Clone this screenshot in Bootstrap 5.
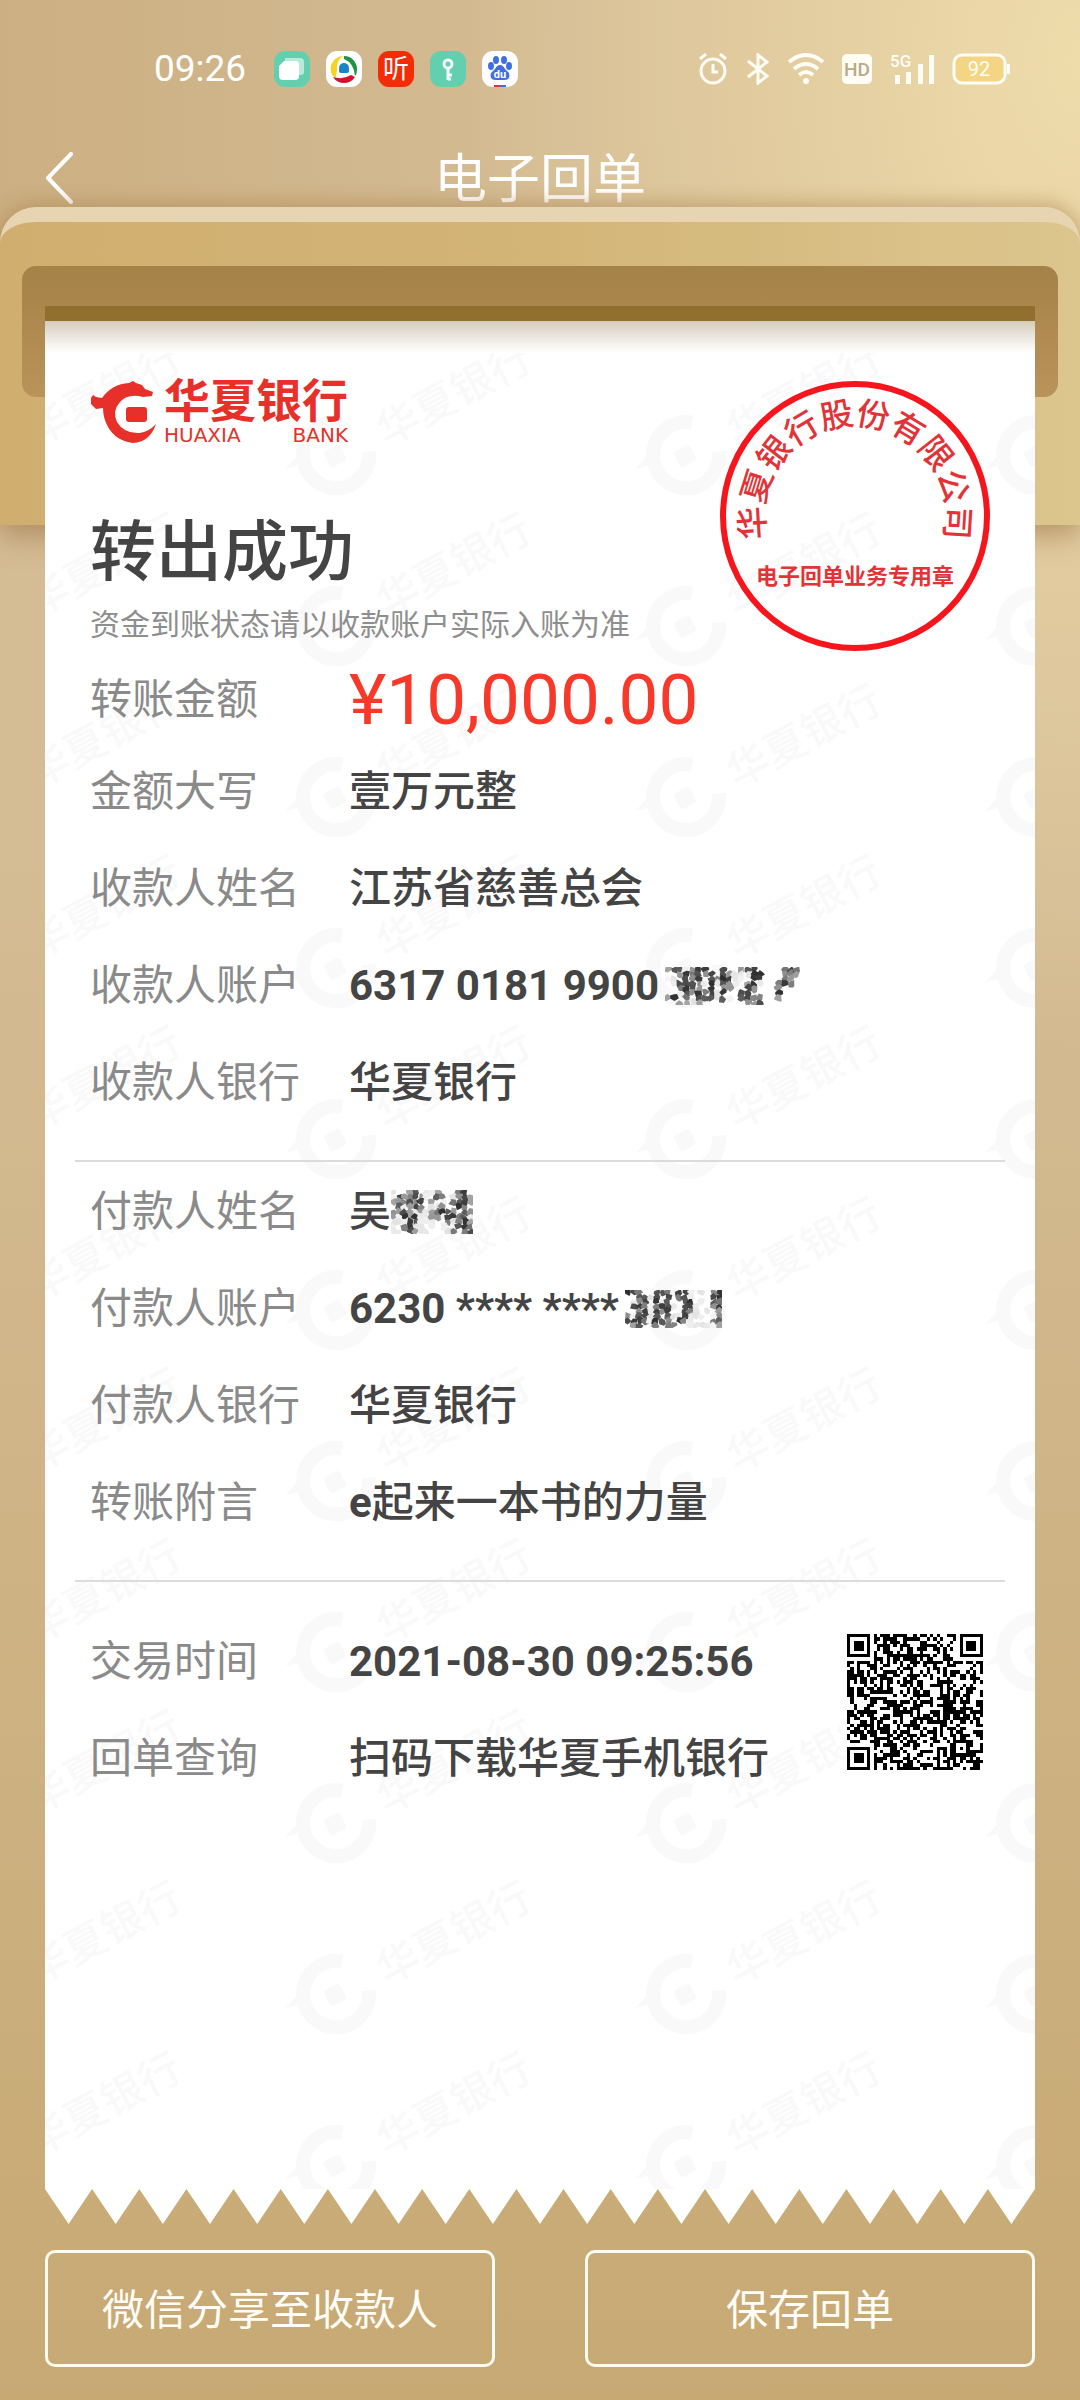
<!DOCTYPE html>
<html lang="zh-CN">
<head>
<meta charset="utf-8">
<meta name="viewport" content="width=device-width, initial-scale=1">
<title>电子回单</title>
<link href="https://cdn.jsdelivr.net/npm/bootstrap@5.3.0/dist/css/bootstrap.min.css" rel="stylesheet">
<style>
  body {
    min-height: 100vh;
    font-family: Roboto, "Noto Sans CJK SC", sans-serif;
    color: #444;
    background:
      radial-gradient(ellipse 620px 1000px at 100% 60px, #efdcab 0%, rgba(239, 220, 171, 0) 100%),
      linear-gradient(90deg, rgba(196, 164, 114, .5) 0%, rgba(217, 195, 152, 0) 55%) top / 100% 300px no-repeat,
      linear-gradient(180deg, #d4bc94 0%, #d4bc94 35%, #c9ac78 90%, #c7a974 100%);
  }
  .status-bar { padding: 42px 70px 0 154px; height: 96px; }
  .status-time { font-size: 37px; line-height: 54px; font-weight: 400; width: 120px; }
  .status-icons { gap: 18px; }
  .title-bar { margin-top: 53px; height: 57px; padding: 0 40px; }
  .title-bar h1 { font-size: 53px; line-height: 57px; font-weight: 400; padding-top: 5px; }
  .side-slot { width: 60px; }
  svg text { font-family: Roboto, "Noto Sans CJK SC", sans-serif; }

  /* printer slot and the paper share one grid cell */
  .printer { display: grid; margin-top: 1px; }
  .printer > * { grid-area: 1 / 1; }
  .housing {
    height: 318px;
    padding: 44px 22px 0;
    border-top: 15px solid #e6d5b0;
    border-radius: 36px 36px 0 0;
    background: linear-gradient(90deg, #d0ae70, #d3b577 50%, #dcc68e);
    box-shadow: 0 -6px 16px rgba(176, 132, 80, .35), 0 12px 28px rgba(150, 105, 60, .5);
  }
  .slot-hole {
    height: 131px;
    padding: 40px 23px 0;
    border-radius: 14px;
    background: linear-gradient(180deg, #a48248, #ad884f 40%, #b9935a);
  }
  .slot-gap { height: 15px; background: #91702f; }
  .paper-wrap { margin: 114px 45px 0; position: relative; }
  .paper {
    position: relative;
    padding: 60px 0 383px;
    background: linear-gradient(180deg, #d6cdb9 0, #e9e4dc 14px, #fff 32px);
  }
  .watermark { position: absolute; inset: 0; width: 100%; height: 100%; }
  .paper-body { position: relative; }
  .px-paper { padding-left: 45px; padding-right: 45px; }
  .tear-edge { height: 35px; }

  .brand-name { font-size: 46px; line-height: 42px; font-weight: 700; }
  .brand-latin { font: 20px/18px "DejaVu Sans", sans-serif; margin-top: 4px; }
  .brand-color { color: #e8302a; height: 62px; }
  .result-title { font-size: 66px; line-height: 80px; margin-top: 70px; font-weight: 500; }
  .result-note { font-size: 30px; line-height: 40px; margin-top: 12px; color: #8e8e8e; }
  .field-row { min-height: 97px; font-size: 42px; line-height: 60px; padding-top: 2px; }
  .field-row dt { width: 259px; font-weight: 400; color: #8a8a8a; }
  .field-row dd { font-weight: 500; }
  .amount-row { min-height: 91px; padding-top: 6px; }
  .amount-row dd { font-size: 71px; font-weight: 400; color: #f8392a; }
  .divider { margin: 30px 30px 0; border-top: 2px solid #dcdcdc; opacity: 1; }
  .query-block { padding-top: 30px; }
  .mask-blob { margin-left: 6px; }
  .qr-box { margin: 22px 7px 0 0; }
  .actions { padding: 26px 45px 33px; gap: 90px; }
  .btn-receipt {
    height: 117px; border: 3px solid #fffdf2; border-radius: 10px; color: #fffdf6;
    font-size: 42px; font-weight: 400; padding-top: 10px;
  }
  .btn-receipt:hover { background: rgba(255, 255, 255, .15); color: #fff; }
</style>
</head>
<body>
<header class="text-white">
  <div class="status-bar d-flex justify-content-between align-items-center">
    <div class="d-flex align-items-center">
      <div class="status-time">09:26</div>
      <div class="d-flex gap-3" aria-hidden="true">
        <svg width="36" height="36" viewBox="0 0 36 36"><rect width="36" height="36" rx="11" fill="#62cfae"/><path d="M11 7h15q4 0 4 4v10q0 3-3 3H11z" fill="#b9ead9"/><path d="M10 10h11q4 0 4 4v11q0 4-4 4H9q-4 0-4-4V15z" fill="#fff"/></svg>
        <svg width="36" height="36" viewBox="0 0 36 36"><rect width="36" height="36" rx="11" fill="#fff"/><path d="M5 21A13 13 0 0 1 17 5Q10 10 11 19L10 26Q6 26 5 21z" fill="#f6d424"/><path d="M18 5A13 13 0 0 1 31 19Q31 23 29 25Q28 12 18 8z" fill="#1d9447"/><path d="M29 26A13 13 0 0 1 7 26Q17 29 25 24z" fill="#d3122c"/><circle cx="18" cy="17" r="5" fill="#1784c6"/><rect x="13" y="17" width="10" height="5" rx="2" fill="#1784c6"/></svg>
        <svg width="36" height="36" viewBox="0 0 36 36"><rect width="36" height="36" rx="11" fill="#f32c05"/><text x="18" y="27" font-size="26" text-anchor="middle" fill="#fff">听</text></svg>
        <svg width="36" height="36" viewBox="0 0 36 36"><rect width="36" height="36" rx="11" fill="#62cfae"/><circle cx="18" cy="13" r="4" fill="none" stroke="#f2fffa" stroke-width="3"/><path d="M18 17v12M18 24h4M18 28h3" stroke="#f2fffa" stroke-width="3"/></svg>
        <svg width="36" height="36" viewBox="0 0 36 36"><rect width="36" height="36" rx="11" fill="#fff"/><g fill="#3f6fe0"><ellipse cx="9" cy="15" rx="3" ry="4"/><ellipse cx="14" cy="9" rx="3" ry="4"/><ellipse cx="22" cy="9" rx="3" ry="4"/><ellipse cx="27" cy="15" rx="3" ry="4"/><path d="M18 14q3 0 5 4l4 4q2 7-5 7H14q-7 0-5-7l4-4q2-4 5-4z"/></g><text x="18" y="27" font-size="11" font-weight="700" text-anchor="middle" fill="#fff">du</text><path d="M12 35h6" stroke="#d33" stroke-width="2"/><path d="M18 35h6" stroke="#3f6fe0" stroke-width="2"/></svg>
      </div>
    </div>
    <div class="status-icons d-flex align-items-center" aria-hidden="true">
      <svg width="30" height="32" viewBox="0 0 30 32" fill="none" stroke="#fffdf4" stroke-width="3"><circle cx="15" cy="18" r="12"/><path d="M15 11v8h5M2 6l6-5M28 6l-6-5"/></svg>
      <svg width="24" height="32" viewBox="0 0 24 32" fill="none" stroke="#fffdf4" stroke-width="3"><path d="M2 8l19 15-9 7V2l9 7L2 24"/></svg>
      <svg width="36" height="32" viewBox="0 0 36 32" fill="none" stroke="#fffdf4" stroke-width="4"><path d="M1 9q17-14 34 0M6 16q12-10 24 0M11 22q7-6 14 0"/><circle cx="18" cy="28" r="3" fill="#fffdf4" stroke="none"/></svg>
      <svg width="30" height="30" viewBox="0 0 30 30"><rect width="30" height="30" rx="5" fill="#fffdf4"/><text x="15" y="22" font-size="19" font-weight="500" text-anchor="middle" fill="#b9ab88">HD</text></svg>
      <svg width="44" height="32" viewBox="0 0 44 32" fill="#fffdf4" overflow="visible"><text x="0" y="14" font-size="17" font-weight="500">5G</text><path d="M5 22h5v9H5zM16 19h5v12h-5zM28 11h5v20h-5zM39 2h5v29h-5z"/></svg>
      <svg width="58" height="32" viewBox="0 0 58 32"><rect x="2" y="2" width="51" height="28" rx="8" fill="#f3d584" stroke="#fffdf4" stroke-width="3"/><path d="M55 11h3v10h-3z" fill="#fffdf4"/><text x="27" y="23" font-size="20" text-anchor="middle" fill="#fffdf4">92</text></svg>
    </div>
  </div>
  <nav class="title-bar d-flex justify-content-between align-items-center" aria-label="页面导航">
    <a href="#" class="side-slot d-block lh-1" aria-label="返回"><svg width="38" height="52" viewBox="0 0 38 52" fill="none" stroke="#fff" stroke-width="4" stroke-linecap="round" stroke-linejoin="round"><path d="M31 2L8 26l23 24"/></svg></a>
    <h1 class="m-0">电子回单</h1>
    <span class="side-slot"></span>
  </nav>
</header>

<main>
  <div class="printer">
    <div class="housing" aria-hidden="true"><div class="slot-hole"><div class="slot-gap"></div></div></div>
    <div class="paper-wrap">
      <article class="paper">
        <svg class="watermark" aria-hidden="true">
          <defs>
            <pattern id="wm" width="350" height="171" patternUnits="userSpaceOnUse" x="235" y="10">
              <g fill="#faf9fa" transform="translate(55 125) rotate(-28)">
                <path d="M22-26A33 33 0 1 0 32 12" fill="none" stroke="#faf9fa" stroke-width="14"/><rect x="-9" y="-9" width="18" height="18" rx="4"/><path d="M-50-12l24-8 0 14z"/>
                <text x="50" y="16" font-size="42" font-weight="500">华夏银行</text>
              </g>
            </pattern>
          </defs>
          <rect y="32" width="100%" height="100%" fill="url(#wm)"/>
        </svg>
        <div class="paper-body">
          <div class="px-paper d-flex justify-content-between align-items-start">
            <div>
              <div class="brand-color d-flex align-items-center">
                <svg width="66" height="62" viewBox="0 0 66 62" class="me-2" aria-hidden="true" fill="#e8302a"><path d="M1 17l2-3 3 2 6 1Q22 3 39 2l4-2 3 2 6 2 3 4 8 3-1 4-9 1Q38 12 30 21 22 30 27 41 34 53 50 52 60 50 66 43 60 61 43 62 26 60 18 46 13 37 13 27L6 28 1 23z"/><rect x="36" y="26" width="21" height="15" rx="3"/></svg>
                <div class="d-flex flex-column">
                  <span class="brand-name">华夏银行</span>
                  <span class="brand-latin d-flex justify-content-between"><span>HUAXIA</span> <span>BANK</span></span>
                </div>
              </div>
              <h2 class="result-title mb-0">转出成功</h2>
              <p class="result-note mb-0">资金到账状态请以收款账户实际入账为准</p>
            </div>
            <svg width="270" height="270" viewBox="0 0 270 270" class="flex-shrink-0" role="img" aria-label="华夏银行股份有限公司电子回单业务专用章" fill="#e23438">
              <circle cx="135" cy="135" r="132" fill="none" stroke="#f5161d" stroke-width="6"/>
              <defs><path id="arc" d="M53 175A91 91 0 1 1 217 175"/></defs>
              <text font-size="33" font-weight="500" text-anchor="middle"><textPath href="#arc" startOffset="50%">华夏银行股份有限公司</textPath></text>
              <text x="135" y="203" font-size="22" font-weight="700" text-anchor="middle">电子回单业务专用章</text>
            </svg>
          </div>

          <dl class="px-paper mb-0">
            <div class="field-row amount-row d-flex align-items-center"><dt>转账金额</dt><dd class="mb-0">¥10,000.00</dd></div>
            <div class="field-row d-flex align-items-center"><dt>金额大写</dt><dd class="mb-0">壹万元整</dd></div>
            <div class="field-row d-flex align-items-center"><dt>收款人姓名</dt><dd class="mb-0">江苏省慈善总会</dd></div>
            <div class="field-row d-flex align-items-center"><dt>收款人账户</dt><dd class="mb-0 fw-bold d-flex align-items-center">6317 0181 9900<svg class="mask-blob" data-mask="acct-in" width="135" height="38" viewBox="0 0 135 38" role="img" aria-label="已遮挡"></svg></dd></div>
            <div class="field-row d-flex align-items-center"><dt>收款人银行</dt><dd class="mb-0">华夏银行</dd></div>
          </dl>
          <hr class="divider">
          <dl class="px-paper mb-0">
            <div class="field-row d-flex align-items-center"><dt>付款人姓名</dt><dd class="mb-0 d-flex align-items-center">吴<svg data-mask="payer" width="82" height="44" viewBox="0 0 82 44" role="img" aria-label="已遮挡"></svg></dd></div>
            <div class="field-row d-flex align-items-center"><dt>付款人账户</dt><dd class="mb-0 fw-bold d-flex align-items-center">6230 **** ****<svg class="mask-blob" data-mask="acct-out" width="97" height="38" viewBox="0 0 97 38" role="img" aria-label="已遮挡"></svg></dd></div>
            <div class="field-row d-flex align-items-center"><dt>付款人银行</dt><dd class="mb-0">华夏银行</dd></div>
            <div class="field-row d-flex align-items-center"><dt>转账附言</dt><dd class="mb-0"><b>e</b>起来一本书的力量</dd></div>
          </dl>
          <hr class="divider mb-0">
          <div class="query-block px-paper d-flex justify-content-between align-items-start">
            <dl class="mb-0">
              <div class="field-row d-flex align-items-center"><dt>交易时间</dt><dd class="mb-0 fw-bold">2021-08-30 09:25:56</dd></div>
              <div class="field-row d-flex align-items-center"><dt>回单查询</dt><dd class="mb-0">扫码下载华夏手机银行</dd></div>
            </dl>
            <div class="qr-box"><svg id="qr" class="d-block" width="136" height="136" viewBox="0 0 41 41" shape-rendering="crispEdges" role="img" aria-label="下载二维码"></svg></div>
          </div>
        </div>
      </article>
      <svg class="tear-edge d-block w-100" viewBox="0 0 42 1" preserveAspectRatio="none" fill="#fff" aria-hidden="true"><path d="M0 0L1 1L2 0L3 1L4 0L5 1L6 0L7 1L8 0L9 1L10 0L11 1L12 0L13 1L14 0L15 1L16 0L17 1L18 0L19 1L20 0L21 1L22 0L23 1L24 0L25 1L26 0L27 1L28 0L29 1L30 0L31 1L32 0L33 1L34 0L35 1L36 0L37 1L38 0L39 1L40 0L41 1L42 0z"/></svg>
    </div>
  </div>
  <div class="actions d-flex">
    <button type="button" class="btn btn-receipt flex-fill w-50">微信分享至收款人</button>
    <button type="button" class="btn btn-receipt flex-fill w-50">保存回单</button>
  </div>
</main>

<script src="https://cdn.jsdelivr.net/npm/bootstrap@5.3.0/dist/js/bootstrap.bundle.min.js"></script>
<script>
  let seed = 20210830;
  const rnd = () => (seed = (seed * 1103515245 + 12345) % 2147483648) / 2147483648;

  // QR code: random modules with finder and alignment squares on top
  const N = 41;
  const inBox = (x, y, bx, by, s) => x >= bx && x < bx + s && y >= by && y < by + s;
  const square = (x, y, bx, by, s) => {
    const r = Math.max(Math.abs(x - bx - (s - 1) / 2), Math.abs(y - by - (s - 1) / 2));
    return r === (s - 1) / 2 || r <= (s === 7 ? 1 : 0);
  };
  let d = '';
  for (let y = 0; y < N; y++) for (let x = 0; x < N; x++) {
    let on = rnd() < 0.54;
    for (const [bx, by] of [[0, 0], [N - 7, 0], [0, N - 7]]) {
      if (inBox(x, y, bx - 1, by - 1, 9)) on = inBox(x, y, bx, by, 7) && square(x, y, bx, by, 7);
    }
    if (inBox(x, y, 32, 32, 5)) on = square(x, y, 32, 32, 5);
    if (on) d += `M${x} ${y}h1v1h-1z`;
  }
  document.getElementById('qr').innerHTML = `<path d="${d}"/>`;

  // Crystallised blobs that hide private characters: # dark, + grey, . pale
  const masks = {
    'acct-in': [
      '+##.+##..#..+##....+#+',
      '..+#+#+#.#+...##...+++',
      '...#+#.#+##...##...++.',
      '..###+.#.#+..+#...+#+.',
      '..+##+.#.++..#+...+...',
      '...#+#+#.#..##....#...',
      '+#.+.###.#..##++..+...',
      '..++.+.......++#......'],
    'payer': [
      '...+#...+...+#.',
      '.#++#+..#+..+#+',
      '+++#+#.+...+##+',
      '.#.+#+...+..#+.',
      '++#+.+.++##+.#+',
      '+.#+#..++.##+#.',
      '...##.....+.+#+',
      '..+#........##+',
      '...#+......+.+#'],
    'acct-out': [
      '##+..##+.##....+#',
      '..##.#.#.+#....##',
      '..+#.#.#..##...#+',
      '.##+.+##..##...+#',
      '..+#.#+#..#+....+',
      '+.##.#.#..#.....+',
      '###+.##+.#+....+#',
      '.+#..+.++.......+']
  };
  document.querySelectorAll('[data-mask]').forEach(svg => {
    const rows = masks[svg.dataset.mask];
    const w = svg.viewBox.baseVal.width / rows[0].length, h = svg.viewBox.baseVal.height / rows.length;
    let out = '';
    rows.forEach((row, y) => [...row].forEach((c, x) => {
      const base = c === '#' ? 45 : c === '+' ? 115 : 225;
      if (c === '.' && (rnd() < 0.6 || (x > row.length * 0.72 && row.length > 20))) return;
      const g = Math.round(base + rnd() * (c === '.' ? 20 : 50));
      const cx = (x + 0.5) * w + rnd() * 2 - 1, cy = (y + 0.5) * h + rnd() * 2 - 1;
      let pts = '';
      for (let k = 0; k < 6; k++) {
        const a = k * Math.PI / 3 + rnd(), r = 3 + rnd() * 1.8;
        pts += `${(cx + r * Math.cos(a)).toFixed(1)},${(cy + r * Math.sin(a)).toFixed(1)} `;
      }
      out += `<polygon points="${pts}" fill="rgb(${g},${g},${g})"/>`;
    }));
    svg.innerHTML = out;
  });
</script>
</body>
</html>
